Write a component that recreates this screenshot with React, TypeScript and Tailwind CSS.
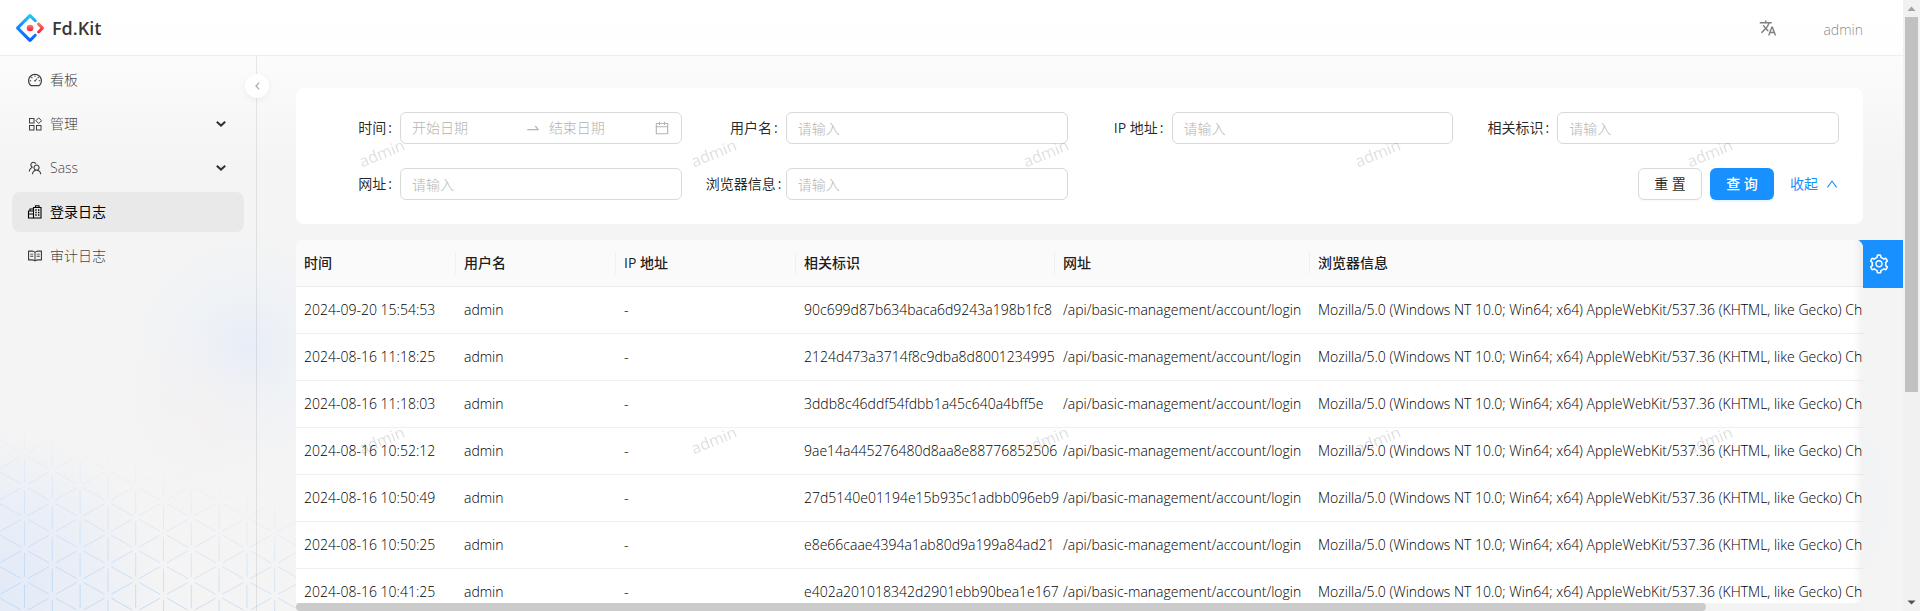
import React from "react";
import {
  AiOutlineCalendar,
  AiOutlineDashboard,
  AiOutlineRead,
  AiOutlineSetting,
  AiOutlineSwapRight,
  AiOutlineTeam,
  AiOutlineUp,
} from "react-icons/ai";
import { MdTranslate } from "react-icons/md";

const AGENT =
  "Mozilla/5.0 (Windows NT 10.0; Win64; x64) AppleWebKit/537.36 (KHTML, like Gecko) Chrome/128.0.0.0 Safari/537.36";
const URL_PATH = "/api/basic-management/account/login";

const ROWS = [
  ["2024-09-20 15:54:53", "90c699d87b634baca6d9243a198b1fc8"],
  ["2024-08-16 11:18:25", "2124d473a3714f8c9dba8d8001234995"],
  ["2024-08-16 11:18:03", "3ddb8c46ddf54fdbb1a45c640a4bff5e"],
  ["2024-08-16 10:52:12", "9ae14a445276480d8aa8e88776852506"],
  ["2024-08-16 10:50:49", "27d5140e01194e15b935c1adbb096eb9"],
  ["2024-08-16 10:50:25", "e8e66caae4394a1ab80d9a199a84ad21"],
  ["2024-08-16 10:41:25", "e402a201018342d2901ebb90bea1e167"],
];

const COLUMNS = ["时间", "用户名", "IP 地址", "相关标识", "网址", "浏览器信息"];

function Logo() {
  return (
    <svg viewBox="0 0 200 200" className="size-7" aria-hidden="true">
      <defs>
        <linearGradient id="logoBlue" x1="0" y1="0" x2="0" y2="1">
          <stop offset="0" stopColor="#29cdff" />
          <stop offset="0.4" stopColor="#148eff" />
          <stop offset="1" stopColor="#0a60ff" />
        </linearGradient>
        <linearGradient id="logoRed" x1="0" y1="0" x2="0" y2="1">
          <stop offset="0" stopColor="#fa816e" />
          <stop offset="0.45" stopColor="#f74a5c" />
          <stop offset="1" stopColor="#f51d2c" />
        </linearGradient>
      </defs>
      <path
        fill="url(#logoBlue)"
        d="M91.6 4.2 4.2 91.5c-4.7 4.7-4.7 12.3 0 17l87.4 87.3c4.7 4.7 12.3 4.7 17 0l36.6-36.6c4.2-4.2 4.2-11 0-15.2s-11-4.2-15.2 0l-27.8 27.7c-1.2 1.2-2.9 1.2-4.1 0L28.3 102c-1.2-1.2-1.2-2.9 0-4.1l69.8-69.8c1.2-1.2 2.9-1.2 4.1 0L130 55.9c4.2 4.2 11 4.2 15.2 0s4.2-11 0-15.2L108.6 4.1c-4.7-4.6-12.3-4.6-17 .1Z"
      />
      <path
        fill="url(#logoRed)"
        d="M153.7 135.9c4.2 4.2 11 4.2 15.2 0l27-27c4.7-4.7 4.7-12.3 0-17l-27.2-27.2c-4.2-4.2-11-4.2-15.3 0s-4.2 11 0 15.3l18.5 18.4c1.1 1.1 1.1 2.9 0 4.1l-18.2 18.1c-4.2 4.2-4.2 11 0 15.3Z"
      />
      <circle cx="100.5" cy="100.4" r="23.6" fill="url(#logoRed)" />
    </svg>
  );
}

function BlocksIcon() {
  return (
    <svg viewBox="-1 -1 16 16" className="size-4" fill="none" stroke="currentColor" strokeWidth="1" aria-hidden="true">
      <rect x="1.5" y="1.5" width="4.5" height="4.5" />
      <rect x="1.5" y="8.500" width="4.5" height="4.5" />
      <rect x="8.5" y="8.5" width="4.5" height="4.5" />
      <path d="M10.700.9 13.500 3.700 10.700 6.500 7.900 3.700Z" />
    </svg>
  );
}

function OfficeIcon() {
  return (
    <svg viewBox="-1 -1 16 16" className="size-4" fill="none" stroke="currentColor" strokeWidth="1.1" aria-hidden="true">
      <path d="M5.5 13V2.500h7.500V13ZM7.500 2.500V.8H11v1.700" />
      <path d="M5.500 13h-5V6h5M.500 9h5M2 6V4h3.500" />
      <path d="M7.300 5h1.400M10 5h1.400M7.300 7.500h1.400M10 7.500h1.400M7.300 10h1.400M10 10h1.400" strokeWidth="1.4" />
    </svg>
  );
}

function Chevron() {
  return (
    <svg viewBox="0 0 10 6" className="h-1.5 w-2.5" fill="none" stroke="currentColor" strokeWidth="2" aria-hidden="true">
      <path d="M.8.8 5 4.6 9.2.8" />
    </svg>
  );
}

function Mesh() {
  const lines: React.ReactNode[] = [];
  const dx = 27.8;
  const dy = 31.5;
  for (let c = -1; c < 12; c++) {
    for (let r = 0; r < 7; r++) {
      const x = 24.5 + c * dx;
      const y = -1 + r * dy + (c % 2 ? dy / 2 : 0);
      lines.push(
        <path
          key={c + "/" + r}
          d={`M${x} ${y + 4}V${y + dy - 4}M${x + 3.5} ${y + 2}L${x + dx - 3.5} ${y + dy / 2 - 2}M${x + 3.5} ${y - 2}L${x + dx - 3.5} ${y - dy / 2 + 2}`}
        />,
      );
    }
  }
  return (
    <svg
      viewBox="0 0 300 187"
      className="absolute bottom-0 left-0 h-[187px] w-[300px] [mask-image:linear-gradient(15deg,#000_15%,transparent_72%)]"
      fill="none"
      stroke="#c2dcf8"
      strokeWidth="1"
      aria-hidden="true"
    >
      {lines}
    </svg>
  );
}

function Backdrop() {
  return (
    <div className="pointer-events-none absolute inset-0 overflow-hidden bg-[linear-gradient(#ffffff,#f4f4f4_28%)]">
      <div className="absolute top-[220px] left-[115px] size-[260px] bg-[radial-gradient(circle,rgba(228,236,249,0.8)_0%,rgba(234,240,248,0.5)_30%,rgba(244,244,244,0)_65%)]" />
      <div className="absolute top-[320px] left-[110px] size-[180px] bg-[radial-gradient(circle,rgba(246,240,239,0.5)_0%,rgba(244,244,244,0)_65%)]" />
      <div className="absolute -bottom-[140px] -left-[160px] size-[320px] bg-[radial-gradient(circle,#e3eaf7_0%,rgba(230,236,247,0.7)_38%,rgba(244,244,244,0)_70%)]" />
      <div className="absolute right-0 bottom-0 h-[220px] w-[120px] bg-[radial-gradient(ellipse,rgba(236,241,245,0.6)_0%,rgba(244,244,244,0)_70%)]" />
      <Mesh />
    </div>
  );
}

function MenuItem(props: { icon: React.ReactNode; label: string; expandable?: boolean; active?: boolean }) {
  return (
    <li>
      <a
        href="#"
        className={
          "flex h-10 items-center gap-[7px] rounded-lg px-[15px] " +
          (props.active ? "bg-[#e9e9e9] font-normal text-black" : "text-black/75")
        }
      >
        {props.icon}
        <span className="flex-1">{props.label}</span>
        {props.expandable && (
          <span className="pr-[3px] text-black/80">
            <Chevron />
          </span>
        )}
      </a>
    </li>
  );
}

function Label(props: { htmlFor: string; children: string }) {
  return (
    <label htmlFor={props.htmlFor} className="w-20 shrink-0 text-right font-normal whitespace-nowrap text-black/85">
      {props.children}
      <span className="mr-2 ml-0.5">:</span>
    </label>
  );
}

function Field(props: { id: string; label: string }) {
  return (
    <div className="flex items-center">
      <Label htmlFor={props.id}>{props.label}</Label>
      <input
        id={props.id}
        placeholder="请输入"
        className="h-8 w-full min-w-0 rounded-md border border-[#d9d9d9] bg-white px-[11px] placeholder:text-[#b4b4b4]"
      />
    </div>
  );
}

function SearchForm() {
  return (
    <form className="grid grid-cols-4 gap-6 rounded-lg bg-white p-6">
      <div className="flex items-center">
        <Label htmlFor="start">时间</Label>
        <div className="flex h-8 w-full min-w-0 items-center rounded-md border border-[#d9d9d9] px-[11px] text-[#b4b4b4]">
          <input id="start" placeholder="开始日期" className="w-0 flex-1 placeholder:text-[#b4b4b4]" />
          <AiOutlineSwapRight className="mx-2 size-4 shrink-0" />
          <input aria-label="结束日期" placeholder="结束日期" className="w-0 flex-1 placeholder:text-[#b4b4b4]" />
          <AiOutlineCalendar className="size-4 shrink-0" />
        </div>
      </div>
      <Field id="user" label="用户名" />
      <Field id="ip" label="IP 地址" />
      <Field id="trace" label="相关标识" />
      <Field id="url" label="网址" />
      <Field id="agent" label="浏览器信息" />
      <div className="col-start-4 flex items-center justify-end gap-2 font-normal">
        <button
          type="reset"
          className="h-8 w-16 rounded-md border border-[#d9d9d9] bg-white text-black/85 shadow-[0_2px_0_rgba(0,0,0,0.02)]"
        >
          重 置
        </button>
        <button
          type="button"
          className="h-8 w-16 rounded-md bg-[#1890ff] font-medium text-white shadow-[0_2px_0_rgba(5,175,255,0.1)]"
        >
          查 询
        </button>
        <a href="#" className="ml-2 flex items-center gap-[7px] text-[#1890ff]">
          收起
          <AiOutlineUp className="size-3.5" />
        </a>
      </div>
    </form>
  );
}

function LogTable() {
  return (
    <div className="relative z-10 overflow-hidden rounded-t-lg bg-white">
      <table className="w-full table-fixed border-separate border-spacing-0 whitespace-nowrap">
        <colgroup>
          <col className="w-[160px]" />
          <col className="w-[160px]" />
          <col className="w-[180px]" />
          <col className="w-[259px]" />
          <col className="w-[255px]" />
          <col />
        </colgroup>
        <thead>
          <tr className="bg-[#fafafa]">
            {COLUMNS.map((name, i) => (
              <th key={name} className="border-b border-[#ececec] px-0 py-3 text-left font-medium text-black/90">
                <div className={"px-2 leading-[22px]" + (i < 5 ? " border-r border-[#f0f0f0]" : "")}>{name}</div>
              </th>
            ))}
          </tr>
        </thead>
        <tbody className="text-black">
          {ROWS.map(([time, trace]) => (
            <tr key={time} className="leading-[22px]">
              <td className="border-b border-[#f0f0f0] px-2 py-3">{time}</td>
              <td className="border-b border-[#f0f0f0] px-2 py-3">admin</td>
              <td className="border-b border-[#f0f0f0] px-2 py-3">-</td>
              <td className="border-b border-[#f0f0f0] px-2 py-3">{trace}</td>
              <td className="border-b border-[#f0f0f0] px-2 py-3">{URL_PATH}</td>
              <td className="overflow-hidden border-b border-[#f0f0f0] px-2 py-3">{AGENT}</td>
            </tr>
          ))}
        </tbody>
      </table>
      <div className="pointer-events-none absolute inset-y-0 right-0 w-2.5 bg-gradient-to-l from-black/5 to-transparent" />
    </div>
  );
}

function Watermark() {
  return (
    <div className="pointer-events-none absolute inset-0 z-20 overflow-hidden" aria-hidden="true">
      <div className="grid w-max grid-cols-[repeat(5,332px)] auto-rows-[287px]">
        {Array.from({ length: 10 }, (_, i) => (
          <span key={i} className="pt-[85px] pl-[102px] text-base leading-6 text-black/15">
            <span className="inline-block -rotate-[22deg] font-normal">admin</span>
          </span>
        ))}
      </div>
    </div>
  );
}

function PageScrollbar() {
  return (
    <div className="relative z-30 flex w-[17px] shrink-0 flex-col items-center bg-[#f1f1f1]" aria-hidden="true">
      <svg viewBox="0 0 17 17" className="size-[17px] shrink-0" fill="#a3a3a3">
        <path d="M8.500 6.500 12.500 11H4.500Z" />
      </svg>
      <div className="min-h-0 w-[13px] flex-1">
        <div className="h-[65%] bg-[#c1c1c1]" />
      </div>
      <svg viewBox="0 0 17 17" className="size-[17px] shrink-0" fill="#505050">
        <path d="M8.500 10.500 12.500 6.500H4.500Z" />
      </svg>
    </div>
  );
}

export default function App() {
  return (
    <div className="relative flex h-screen overflow-hidden text-sm leading-[22px] font-light [font-family:'Open_Sans','Noto_Sans_CJK_SC',sans-serif]">
      <div className="relative flex min-w-0 flex-1 flex-col">
        <Backdrop />
        <header className="relative flex h-14 shrink-0 items-center border-b border-black/[0.06] bg-white/60 px-4">
          <a href="#" className="flex items-center gap-2">
            <Logo />
            <h1 className="text-lg font-semibold text-black/80">Fd.Kit</h1>
          </a>
          <div className="ml-auto flex items-center gap-[46px] pr-6 text-black/50">
            <button type="button" aria-label="Language">
              <MdTranslate className="size-[18px]" />
            </button>
            <span className="pt-1">admin</span>
          </div>
        </header>
        <div className="relative flex min-h-0 flex-1">
          <aside className="relative z-10 w-64 shrink-0 px-3 pt-1 shadow-[1px_0_0_rgba(5,5,5,0.08)]">
            <nav>
              <ul className="flex flex-col gap-1">
                <MenuItem icon={<AiOutlineDashboard className="size-4" />} label="看板" />
                <MenuItem icon={<BlocksIcon />} label="管理" expandable />
                <MenuItem icon={<AiOutlineTeam className="size-4" />} label="Sass" expandable />
                <MenuItem icon={<OfficeIcon />} label="登录日志" active />
                <MenuItem icon={<AiOutlineRead className="size-4" />} label="审计日志" />
              </ul>
            </nav>
            <button
              type="button"
              aria-label="Collapse"
              className="absolute top-[18px] -right-[13px] flex size-6 items-center justify-center rounded-full bg-white text-black/35 shadow-[0_2px_8px_-2px_rgba(0,0,0,0.1)]"
            >
              <svg viewBox="0 0 6 10" className="h-2 w-[5px]" fill="none" stroke="currentColor" strokeWidth="1.5" aria-hidden="true">
                <path d="M5.200.8 1 5l4.200 4.200" />
              </svg>
            </button>
          </aside>
          <main className="relative flex min-h-0 min-w-0 flex-1 flex-col overflow-hidden px-10 pt-8">
            <SearchForm />
            <div className="relative mt-4 min-h-0 flex-1">
              <LogTable />
              <button
                type="button"
                aria-label="Settings"
                className="absolute top-0 -right-10 flex size-12 items-center justify-center rounded-l-md bg-[#1890ff] text-white"
              >
                <AiOutlineSetting className="size-[22px]" />
              </button>
              <div className="absolute inset-x-0 bottom-0 z-10 h-2 bg-[#f3f3f3]" aria-hidden="true">
                <div className="h-2 w-[90%] rounded-full bg-[#cbcbcb]" />
              </div>
            </div>
            <Watermark />
          </main>
        </div>
      </div>
      <PageScrollbar />
    </div>
  );
}
